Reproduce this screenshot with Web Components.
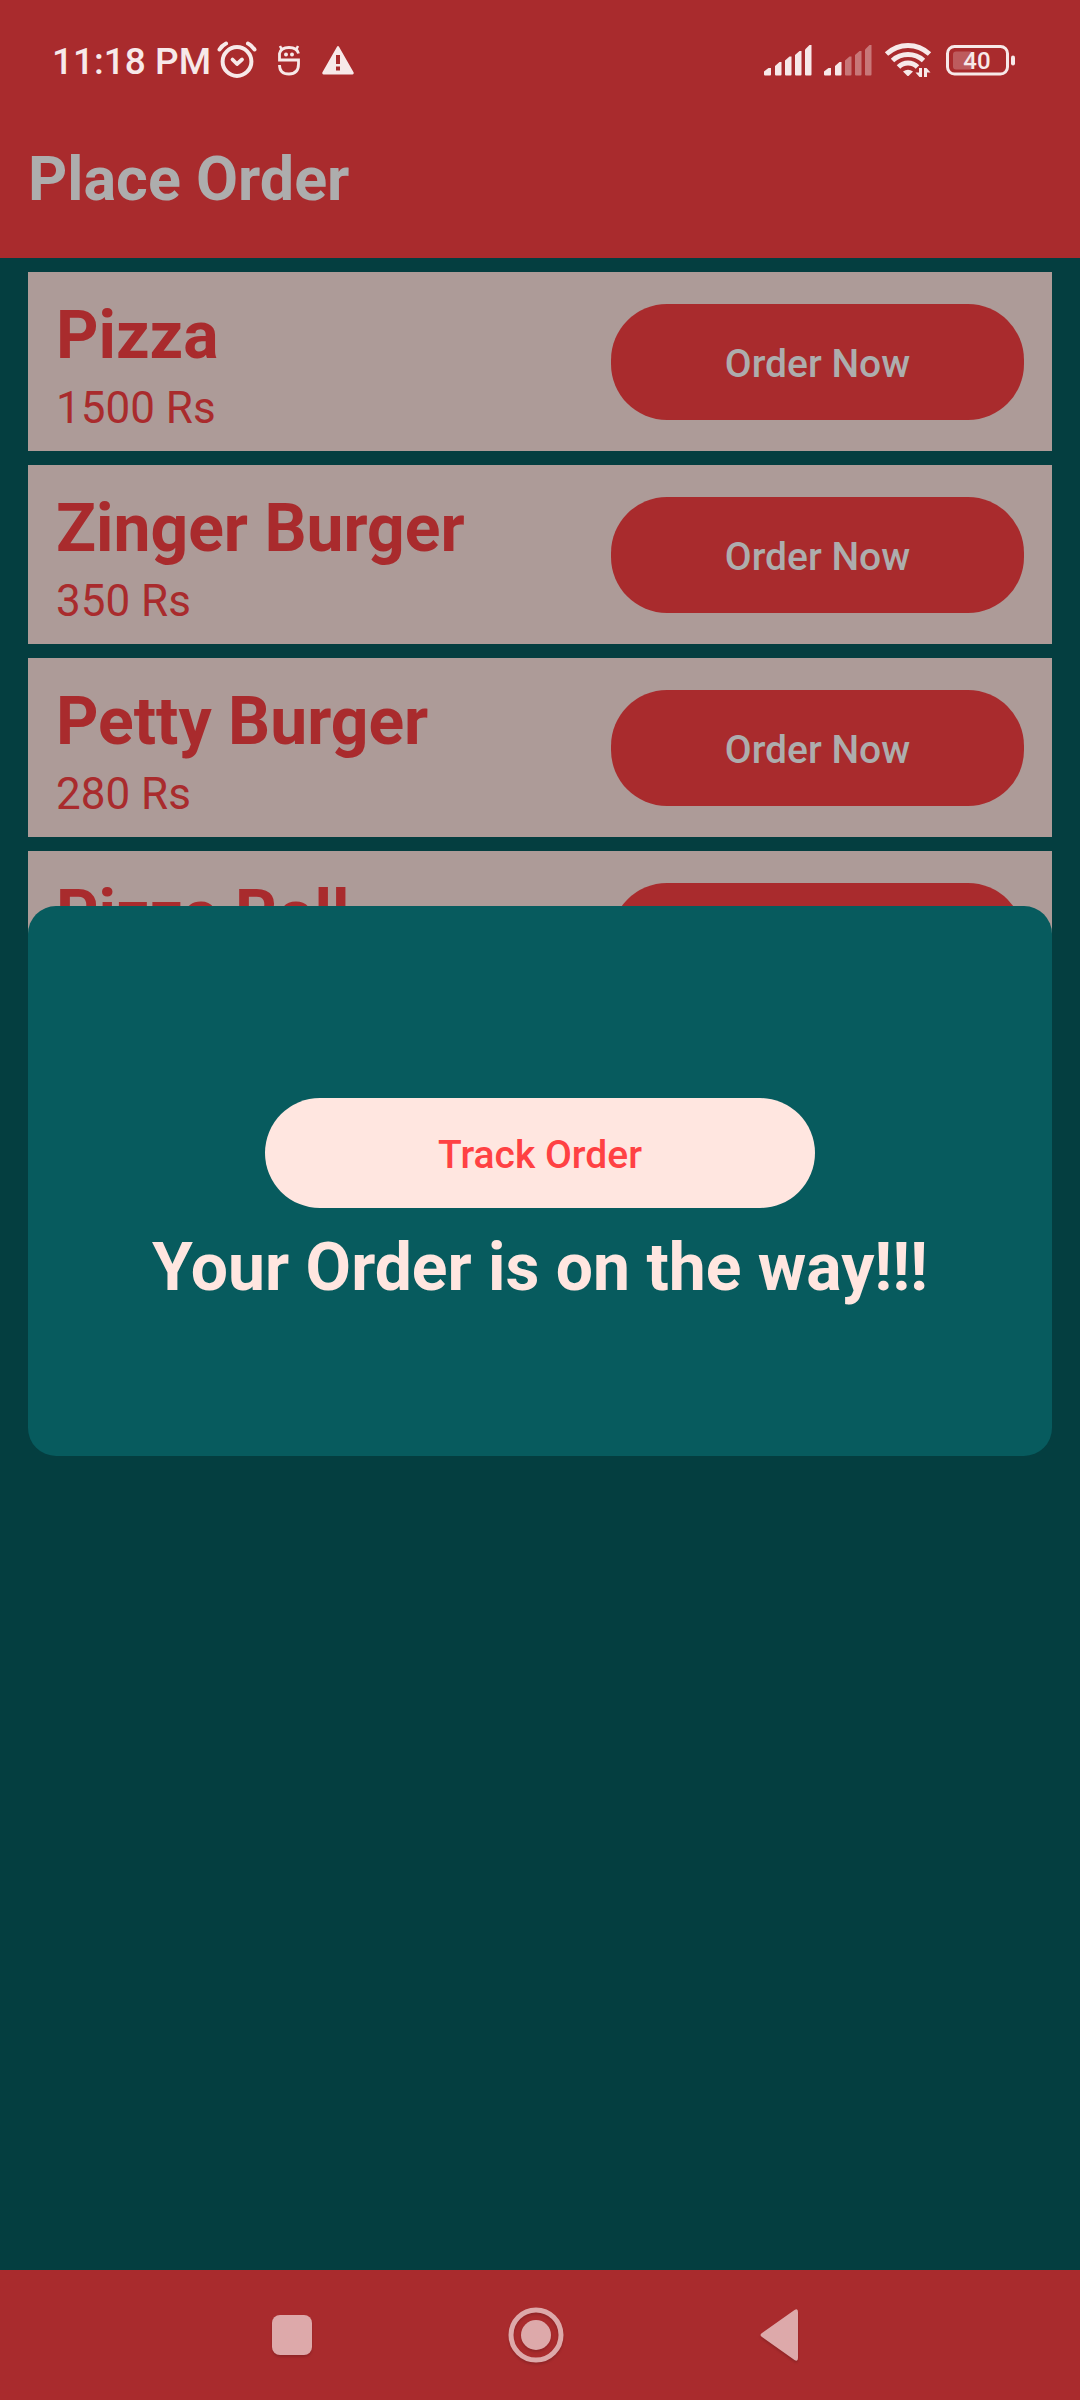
<!DOCTYPE html>
<html lang="en">
<head>
<meta charset="utf-8">
<meta name="viewport" content="width=device-width, initial-scale=1">
<title>Place Order</title>
<style>
  :root {
    --red: #a92b2d;
    --teal-dark: #043e40;
    --teal: #075b5e;
    --card: #ad9b98;
    --muted: #adadad;
    --blush: #ffe6e0;
    --accent: #ff4143;
  }
  body { margin: 0; font-family: Roboto, sans-serif; background: var(--teal-dark); }
</style>
</head>
<body>
<order-app></order-app>

<template id="t-app">
  <style>
    :host { display: flex; flex-direction: column; min-height: 100vh; background: var(--teal-dark); }
    main { position: relative; flex: 1; display: flex; flex-direction: column; }
    .list { display: flex; flex-direction: column; gap: 14px; padding: 14px 28px; }
    .overlay { position: absolute; inset: 0; display: flex; align-items: center; padding: 0 28px; }
    order-dialog { flex: 1; }
  </style>
  <status-bar></status-bar>
  <main>
    <app-header>Place Order</app-header>
    <div class="list">
      <menu-item><span slot="name">Pizza</span><span slot="price">1500 Rs</span></menu-item>
      <menu-item><span slot="name">Zinger Burger</span><span slot="price">350 Rs</span></menu-item>
      <menu-item><span slot="name">Petty Burger</span><span slot="price">280 Rs</span></menu-item>
      <menu-item><span slot="name">Pizza Roll</span></menu-item>
    </div>
    <div class="overlay">
      <order-dialog>Your Order is on the way!!!</order-dialog>
    </div>
  </main>
  <nav-bar></nav-bar>
</template>

<template id="t-status">
  <style>
    :host { display: flex; justify-content: space-between; align-items: center; box-sizing: border-box;
      height: 92px; padding: 28px 64px 0 52px; background: var(--red); color: #f7e9e9; }
    div { display: flex; align-items: center; }
    svg { display: block; fill: currentColor; }
    time { padding-top: 4px; font-size: 37px; font-weight: 500; line-height: 40px; }
    .left { gap: 20px; }
    .clock { gap: 6px; }
    .right { gap: 12px; }
    .battery { position: relative; margin-left: 2px; }
    .battery span { position: absolute; inset: 0 8px 0 0; text-align: center; font-size: 24px; line-height: 34px; font-weight: 500; }
  </style>
  <div class="left">
    <div class="clock">
      <time>11:18 PM</time>
      <svg width="40" height="38" viewBox="0 0 40 38" aria-hidden="true">
        <g fill="none" stroke="currentColor" stroke-linecap="round">
          <circle cx="20" cy="20.5" r="14.4" stroke-width="4"/>
          <path d="M2.500 8.500Q5 4.500 9 2.500M37.500 8.500Q35 4.500 31 2.500" stroke-width="4"/>
          <path d="M15.500 18.500l4.500 4.500 5-4.500" stroke-width="3.800" stroke-linejoin="round"/>
        </g>
      </svg>
    </div>
    <svg width="24" height="32" viewBox="0 0 24 32" aria-hidden="true">
      <path d="M21.500 9.500Q20 3.500 12 3.500T2.500 9.500V16H21.500V20Q21.500 30 12 30T2.500 21" fill="none" stroke="currentColor" stroke-width="2.800"/>
      <path d="M5 6L3 2M19 6l2-4" stroke="currentColor" stroke-width="2.500"/>
      <circle cx="9" cy="10.500" r="2"/><circle cx="15" cy="10.500" r="2"/>
    </svg>
    <svg width="34" height="32" viewBox="0 0 34 32" aria-hidden="true">
      <path fill-rule="evenodd" d="M17 2Q17.600 2 18 2.800L32.700 28.500Q33 30.500 31.500 30.500H2.500Q1 30.500 1.300 28.500L16 2.800Q16.400 2 17 2ZM15 11v9h4v-9ZM15 22.500v4h4v-4Z"/>
    </svg>
  </div>
  <div class="right">
    <svg width="48" height="32" viewBox="0 0 48 32" aria-hidden="true">
      <path d="M0 27.500L4.500 24H7v6.500q0 1-1 1H1q-1 0-1-1Z"/>
      <path d="M11 22L15.500 18H17.500v12.500q0 1-1 1H12q-1 0-1-1Z"/>
      <path d="M21 16.500L25.500 12.500H27.500v18q0 1-1 1H22q-1 0-1-1Z"/>
      <path d="M31 11L35.500 7H37.500v23.500q0 1-1 1H32q-1 0-1-1Z"/>
      <path d="M41 5.500L45.500 1H47.500v29.500q0 1-1 1H42q-1 0-1-1Z"/>
    </svg>
    <svg width="48" height="32" viewBox="0 0 48 32" aria-hidden="true">
      <path d="M0 27.500L4.500 24H7v6.500q0 1-1 1H1q-1 0-1-1Z"/>
      <path d="M11 22L15.500 18H17.500v12.500q0 1-1 1H12q-1 0-1-1Z"/>
      <g opacity=".4">
        <path d="M21 16.500L25.500 12.500H27.500v18q0 1-1 1H22q-1 0-1-1Z"/>
        <path d="M31 11L35.500 7H37.500v23.500q0 1-1 1H32q-1 0-1-1Z"/>
        <path d="M41 5.500L45.500 1H47.500v29.500q0 1-1 1H42q-1 0-1-1Z"/>
      </g>
    </svg>
    <svg width="48" height="36" viewBox="0 0 48 36" aria-hidden="true">
      <g fill="none" stroke="currentColor" stroke-width="5">
        <path d="M2.500 12Q12 3.500 24 3.500T45.500 12"/>
        <path d="M8.500 18.500Q15 12.500 24 12.500T39.500 18.500"/>
        <path d="M14.500 25Q18.500 21 24 21T33.500 25"/>
      </g>
      <path d="M19 29.500Q24 26 29 29.500L25 33.500Q24 34.500 23 33.500Z"/>
      <path d="M35 26h3v9h-2.500l-4-4.500H35ZM40 26h2.500l4 4.500H43V35h-3Z"/>
    </svg>
    <div class="battery">
      <svg width="70" height="32" viewBox="0 0 70 32" aria-hidden="true">
        <rect x="1.500" y="2.500" width="60" height="27.500" rx="7" fill="none" stroke="currentColor" stroke-width="3"/>
        <path d="M10 7.500H25V25.500H10Q7 25.500 7 22.500V10.500Q7 7.500 10 7.500Z" opacity=".26"/>
        <rect x="65" y="11.500" width="4" height="10" rx="2"/>
      </svg>
      <span>40</span>
    </div>
  </div>
</template>

<template id="t-header">
  <style>
    :host { display: flex; align-items: center; box-sizing: border-box; height: 166px; padding: 8px 28px 0; background: var(--red); }
    h1 { margin: 0; font-size: 61px; line-height: 72px; font-weight: 700; color: var(--muted); }
  </style>
  <h1><slot></slot></h1>
</template>

<template id="t-pill">
  <style>
    :host { display: block; }
    button { display: block; width: 100%; height: var(--pill-height, 116px); padding: 4px 24px 0; border: 0; border-radius: 56px;
      background: var(--pill-bg, var(--red)); color: var(--pill-fg, var(--muted));
      font: 500 39px/46px Roboto, sans-serif; }
  </style>
  <button type="button"><slot></slot></button>
</template>

<template id="t-item">
  <style>
    :host { display: flex; justify-content: space-between; align-items: center; box-sizing: border-box;
      height: 179px; padding: 0 28px; background: var(--card); color: var(--red); }
    .text { padding-top: 8px; }
    h2 { margin: 0; font-size: 66px; line-height: 78px; font-weight: 700; }
    p { margin: 7px 0 0; min-height: 52px; font-size: 44px; line-height: 52px; }
    pill-button { flex: 0 0 413px; }
  </style>
  <div class="text">
    <h2><slot name="name"></slot></h2>
    <p><slot name="price"></slot></p>
  </div>
  <pill-button>Order Now</pill-button>
</template>

<template id="t-dialog">
  <style>
    :host { display: flex; flex-direction: column; align-items: center; gap: 21px; box-sizing: border-box;
      height: 550px; padding-top: 192px; border-radius: 28px; background: var(--teal); color: var(--blush); }
    pill-button { width: 550px; --pill-height: 110px; --pill-bg: var(--blush); --pill-fg: var(--accent); }
    p { margin: 0; font-size: 66px; line-height: 78px; font-weight: 700; }
  </style>
  <pill-button>Track Order</pill-button>
  <p><slot></slot></p>
</template>

<template id="t-nav">
  <style>
    :host { display: flex; justify-content: center; align-items: center; gap: 184px; box-sizing: border-box;
      height: 130px; padding-right: 8px; background: var(--red); }
    button { display: block; width: 60px; height: 60px; padding: 0; border: 0; background: none; color: #dda9aa; }
    svg { display: block; fill: currentColor; filter: drop-shadow(0 2px 1px #00000026); }
  </style>
  <button type="button" aria-label="Recent apps"><svg width="60" height="60"><rect x="10" y="10" width="40" height="40" rx="8"/></svg></button>
  <button type="button" aria-label="Home"><svg width="60" height="60"><circle cx="30" cy="30" r="25" fill="none" stroke="currentColor" stroke-width="5"/><circle cx="30" cy="30" r="15"/></svg></button>
  <button type="button" aria-label="Back"><svg width="60" height="60"><path d="M12 28L44.500 5Q48 3 48 7V53Q48 57 44.500 55L12 32Q9 30 12 28Z"/></svg></button>
</template>

<script>
  const define = (tag, id) => customElements.define(tag, class extends HTMLElement {
    constructor() {
      super();
      this.attachShadow({ mode: "open" }).append(document.getElementById(id).content.cloneNode(true));
    }
  });
  define("pill-button", "t-pill");
  define("menu-item", "t-item");
  define("order-dialog", "t-dialog");
  define("app-header", "t-header");
  define("status-bar", "t-status");
  define("nav-bar", "t-nav");
  define("order-app", "t-app");
</script>
</body>
</html>
